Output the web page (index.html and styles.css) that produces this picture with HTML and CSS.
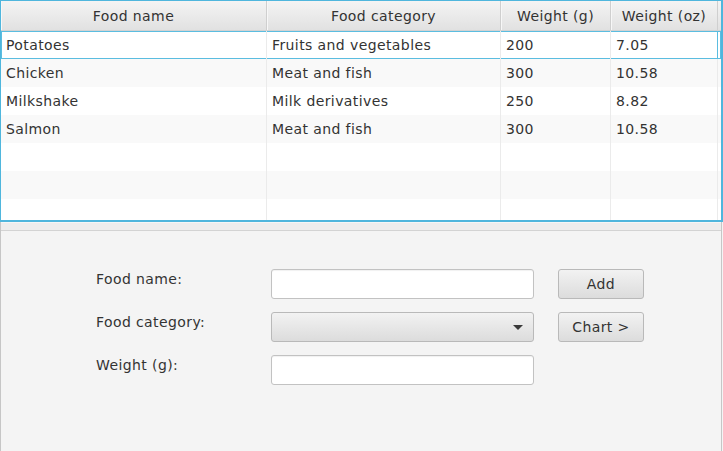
FILE: index.html
```html
<!DOCTYPE html>
<html>
<head>
<meta charset="utf-8">
<link rel="stylesheet" href="styles.css">
</head>
<body>
<div class="app">
  <div class="table">
    <div class="row header">
      <div class="cell">Food name</div>
      <div class="cell">Food category</div>
      <div class="cell">Weight (g)</div>
      <div class="cell">Weight (oz)</div>
      <div class="filler"></div>
    </div>
    <div class="body">
      <div class="row focused">
        <div class="cell">Potatoes</div>
        <div class="cell">Fruits and vegetables</div>
        <div class="cell">200</div>
        <div class="cell">7.05</div>
        <div class="filler"></div>
      </div>
      <div class="row alt">
        <div class="cell">Chicken</div>
        <div class="cell">Meat and fish</div>
        <div class="cell">300</div>
        <div class="cell">10.58</div>
        <div class="filler"></div>
      </div>
      <div class="row">
        <div class="cell">Milkshake</div>
        <div class="cell">Milk derivatives</div>
        <div class="cell">250</div>
        <div class="cell">8.82</div>
        <div class="filler"></div>
      </div>
      <div class="row alt">
        <div class="cell">Salmon</div>
        <div class="cell">Meat and fish</div>
        <div class="cell">300</div>
        <div class="cell">10.58</div>
        <div class="filler"></div>
      </div>
      <div class="row">
        <div class="cell"></div><div class="cell"></div><div class="cell"></div><div class="cell"></div><div class="filler"></div>
      </div>
      <div class="row alt">
        <div class="cell"></div><div class="cell"></div><div class="cell"></div><div class="cell"></div><div class="filler"></div>
      </div>
      <div class="row">
        <div class="cell"></div><div class="cell"></div><div class="cell"></div><div class="cell"></div><div class="filler"></div>
      </div>
    </div>
  </div>
  <div class="lower">
    <div class="divider"></div>
    <div class="pane">
      <div class="form">
        <div class="label">Food name:</div>
        <div class="field"></div>
        <div class="button btn-col">Add</div>

        <div class="label">Food category:</div>
        <div class="combo"><span class="arrow"></span></div>
        <div class="button btn-col">Chart &gt;</div>

        <div class="label">Weight (g):</div>
        <div class="field"></div>
      </div>
    </div>
  </div>
</div>
</body>
</html>
```

FILE: styles.css
```css
* { box-sizing: border-box; }
html, body {
  margin: 0;
  padding: 0;
  width: 723px;
  height: 451px;
  overflow: hidden;
  background: #f4f4f4;
  font-family: "DejaVu Sans", sans-serif;
  font-size: 14px;
  letter-spacing: 0.4px;
  color: #333;
}
.app {
  width: 723px;
  height: 451px;
  display: flex;
  flex-direction: column;
}
.table {
  height: 222px;
  background: #fff;
  border-top: 1px solid #4fb6dd;
  border-left: 1px solid #4fb6dd;
  border-right: 2px solid #4fb6dd;
  border-bottom: 2px solid #4fb6dd;
  display: flex;
  flex-direction: column;
  overflow: hidden;
}
.row {
  display: grid;
  grid-template-columns: 266px 234px 110px 107px 3px;
  height: 28px;
  background: #fff;
}
.row.alt { background: #f9f9f9; }
.cell {
  border-right: 1px solid #ebebeb;
  padding-left: 5px;
  display: flex;
  align-items: center;
  white-space: nowrap;
  overflow: hidden;
}
.header {
  height: 30px;
  background: linear-gradient(#f4f4f4, #e1e1e1);
  border-bottom: 1px solid #d2d2d2;
}
.header .cell {
  justify-content: center;
  padding-left: 0;
  padding-top: 1px;
  border-right: 1px solid #cfcfcf;
  box-shadow: inset 1px 0 0 #f7f7f7;
}
.body {
  flex: 1;
  overflow: hidden;
}
.row.focused {
  box-shadow: inset 0 0 0 1px #5bbde0;
}
.row.focused .cell:nth-child(4) {
  border-right-color: #5bbde0;
}
.header .filler { background: linear-gradient(#f4f4f4, #e1e1e1); }
.lower {
  flex: 1;
  display: flex;
  flex-direction: column;
  border-left: 1px solid #c6c6c6;
  border-right: 1px solid #c6c6c6;
  margin-right: 1px;
}
.divider {
  height: 9px;
  background: #ededed;
  border-top: 1px solid #f6f6f6;
  border-bottom: 1px solid #d3d3d3;
}
.pane {
  flex: 1;
  padding: 38px 0 0 95px;
}
.form {
  display: grid;
  grid-template-columns: 175px 263px 24px 86px;
  grid-auto-rows: 30px;
  row-gap: 13px;
}
.label {
  grid-column: 1;
  padding-top: 1px;
  line-height: 18px;
}
.field {
  grid-column: 2;
  background: #fff;
  border: 1px solid #c2c2c2;
  border-radius: 3px;
  box-shadow: inset 0 1px 1px rgba(0,0,0,0.06);
}
.combo {
  grid-column: 2;
  border: 1px solid #b9b9b9;
  border-radius: 3px;
  background: linear-gradient(#f2f2f2, #dcdcdc);
  display: flex;
  justify-content: flex-end;
  align-items: center;
  padding-right: 10px;
}
.arrow {
  width: 0;
  height: 0;
  border-left: 5px solid transparent;
  border-right: 5px solid transparent;
  border-top: 5px solid #3a3a3a;
}
.button {
  border: 1px solid #b9b9b9;
  border-radius: 3px;
  background: linear-gradient(#f2f2f2, #dcdcdc);
  display: flex;
  align-items: center;
  justify-content: center;
}
.btn-col { grid-column: 4; }
```
